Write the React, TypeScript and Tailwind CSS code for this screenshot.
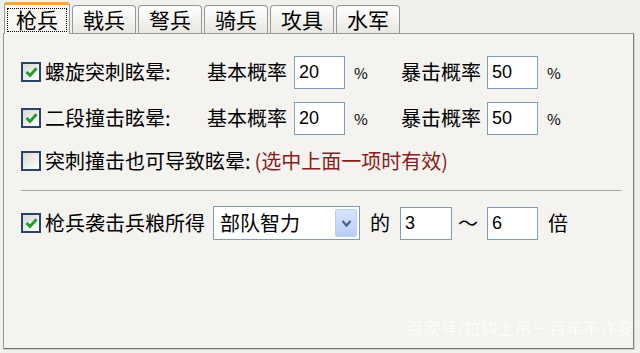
import React from 'react'

const tabs = ['枪兵', '戟兵', '弩兵', '骑兵', '攻具', '水军']

function Check({ on }: { on?: boolean }) {
	return (
		<span className="flex h-[20px] w-[20px] shrink-0 items-center justify-center border-2 border-[#2a4468] bg-gradient-to-br from-[#d8d8d2] to-[#ffffff]">
			{on && (
				<svg width="13" height="12" viewBox="0 0 13 12">
					<path d="M1.5 6 L5 9.5 L11.5 2.2" fill="none" stroke="#1f9a2a" strokeWidth="2.8" />
				</svg>
			)}
		</span>
	)
}

function Field({ value, w = 'w-[51px]' }: { value: string; w?: string }) {
	return (
		<span
			className={`${w} flex h-[33px] shrink-0 items-center border border-[#7f9db9] bg-white pl-[4px] text-[18px] text-black`}
			style={{ fontFamily: '"Liberation Sans", Arial, sans-serif' }}
		>
			{value}
		</span>
	)
}

function Select() {
	return (
		<span className="flex h-[34px] w-[147px] shrink-0 items-center border border-[#7f9db9] bg-white pl-[6px]">
			<span className="flex-1 text-[20px]">部队智力</span>
			<span className="mr-[2px] flex h-[28px] w-[22px] items-center justify-center rounded-[2px] border border-[#b9cdf6] bg-gradient-to-b from-[#d9e5fd] to-[#b8cdf6]">
				<svg width="11" height="9" viewBox="0 0 11 9">
					<path d="M1.5 2 L5.5 6.5 L9.5 2" fill="none" stroke="#4d6185" strokeWidth="2.2" />
				</svg>
			</span>
		</span>
	)
}

function RateRow({ label, on }: { label: string; on?: boolean }) {
	return (
		<div className="flex h-[34px] items-center">
			<Check on={on} />
			<span className="ml-[4px] w-[162px] shrink-0">{label}</span>
			<span className="w-[87px] shrink-0">基本概率</span>
			<Field value="20" />
			<span className="w-[56px] shrink-0 pl-[9px] text-[15px]">%</span>
			<span className="w-[86px] shrink-0">暴击概率</span>
			<Field value="50" />
			<span className="pl-[9px] text-[15px]">%</span>
		</div>
	)
}

export default function App() {
	return (
		<div
			className="relative h-[353px] w-[640px] overflow-hidden bg-[#f1f0ec] text-[20px] leading-none text-black"
			style={{ fontFamily: '"Noto Sans CJK SC", "Noto Sans", sans-serif' }}
		>
			{/* tab strip */}
			<div className="flex h-[33px] items-end gap-[2px] pl-[4px]">
				{tabs.map((t, i) =>
					i === 0 ? (
						<div
							key={t}
							className="relative z-10 -mb-px flex h-[32px] w-[66px] items-center justify-center rounded-t-[3px] border-x border-t-[3px] border-x-[#919b9c] border-t-[#f5a53c] bg-[#f8f7f4]"
						>
							<span className="flex h-[24px] w-[60px] items-center justify-center border border-dotted border-black text-[21px]">
								{t}
							</span>
						</div>
					) : (
						<div
							key={t}
							className="flex h-[28px] w-[64px] items-center justify-center rounded-t-[4px] border-x border-t border-[#919b9c] bg-gradient-to-b from-white to-[#e8e7e1] text-[21px]"
						>
							{t}
						</div>
					),
				)}
			</div>

			{/* panel */}
			<div className="ml-[3px] h-[316px] w-[631px] border border-[#919b9c] border-r-[#808586] border-b-[#6f7475] bg-[#f4f3f0] pl-[17px] pt-[21px] shadow-[1px_1px_0_#d0d0cc]">
				<RateRow label="螺旋突刺眩晕:" on />
				<div className="mt-[12px]">
					<RateRow label="二段撞击眩晕:" on />
				</div>

				<div className="mt-[9px] flex h-[34px] items-center">
					<Check />
					<span className="ml-[4px]">突刺撞击也可导致眩晕:</span>
					<span className="ml-[4px] text-[#8a1c1c]">(选中上面一项时有效)</span>
				</div>

				<div className="mr-[12px] mt-[12px] border-t border-[#a7a6a2]" />

				<div className="mt-[15px] flex h-[34px] items-center">
					<Check on />
					<span className="ml-[4px] w-[168px] shrink-0">枪兵袭击兵粮所得</span>
					<Select />
					<span className="w-[40px] shrink-0 pl-[10px]">的</span>
					<Field value="3" w="w-[52px]" />
					<span className="w-[35px] shrink-0 pl-[6px]">～</span>
					<Field value="6" />
					<span className="pl-[10px]">倍</span>
				</div>
			</div>

			{/* watermark */}
			<span className="absolute left-[406px] top-[319px] text-[17px] text-white/70">百家号/拉钩上吊一百年不许变</span>
		</div>
	)
}
